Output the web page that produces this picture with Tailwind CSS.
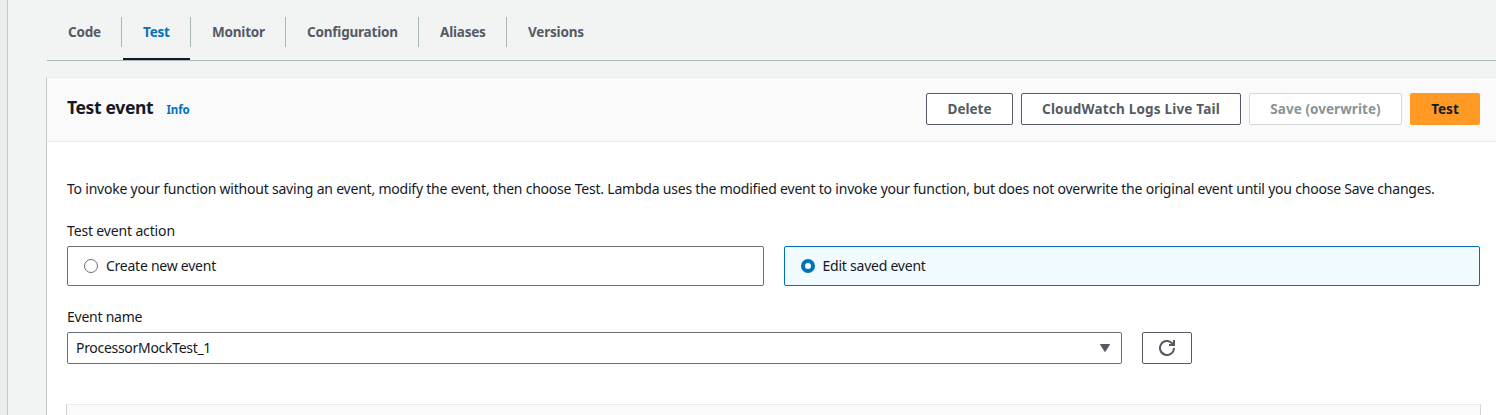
<!DOCTYPE html>
<html lang="en">
<head>
<meta charset="utf-8">
<title>Test event</title>
<script src="https://cdn.jsdelivr.net/npm/@tailwindcss/browser@4"></script>
</head>
<body class="flex h-[415px] w-[1496px] overflow-hidden bg-[#f2f3f3] font-['Noto_Sans','Open_Sans',sans-serif] text-[14px] leading-[22px] text-[#16191f]">
<aside class="w-2 shrink-0 border-r border-[#c8caca] bg-[#eaeded]"></aside>
<main class="flex min-w-0 grow flex-col pl-[38px]">
  <nav class="ml-px flex h-[61px] shrink-0 border-b border-[#aab7b8] pt-[17px] text-[13.5px] font-bold leading-[30px] tracking-[-0.2px] text-[#545b64]">
    <div class="h-[30px] w-[75px] border-r border-[#aab7b8] pl-[21px]">Code</div>
    <div class="relative h-[30px] w-[69px] border-r border-[#aab7b8] pl-[21px] text-[#0073bb]">Test<i class="absolute left-px top-[41px] h-[2px] w-[67px] bg-[#16191f]"></i></div>
    <div class="h-[30px] w-[95px] border-r border-[#aab7b8] pl-[21px]">Monitor</div>
    <div class="h-[30px] w-[133px] border-r border-[#aab7b8] pl-[21px]">Configuration</div>
    <div class="h-[30px] w-[88px] border-r border-[#aab7b8] pl-[21px]">Aliases</div>
    <div class="h-[30px] pl-[21px]">Versions</div>
  </nav>
  <section class="mt-4 flex grow flex-col border-l border-t border-l-[#c8caca] border-t-[#eaeded] bg-white">
    <header class="flex h-16 shrink-0 items-start border-b border-[#eaeded] bg-[#fafafa] pl-5 pr-4 pt-[15px]">
      <h1 class="w-[99.5px] whitespace-nowrap text-[17.5px] font-bold leading-[29px] tracking-[-0.35px]">Test event</h1>
      <a class="pt-[6px] text-[11.5px] font-bold leading-[22px] tracking-[-0.1px] text-[#0073bb]">Info</a>
      <div class="ml-auto flex gap-2 whitespace-nowrap text-[13.5px] font-bold text-[#545b64]">
        <button class="h-8 w-[87px] rounded-[2px] border border-[#545b64] bg-white">Delete</button>
        <button class="h-8 w-[220px] rounded-[2px] border border-[#545b64] bg-white tracking-[0.2px]">CloudWatch Logs Live Tail</button>
        <button class="h-8 w-[153px] rounded-[2px] border border-[#d5dbdb] bg-white tracking-[0.05px] text-[#879596]">Save (overwrite)</button>
        <button class="h-8 w-[70px] rounded-[2px] bg-[#ff9924] text-[#16191f]">Test</button>
      </div>
    </header>
    <div class="flex grow flex-col whitespace-nowrap pl-5 pr-4 pt-[36px] tracking-[-0.2px]">
      <p class="tracking-[-0.215px]">To invoke your function without saving an event, modify the event, then choose Test. Lambda uses the modified event to invoke your function, but does not overwrite the original event until you choose Save changes.</p>
      <div class="mt-5 tracking-[-0.15px]">Test event action</div>
      <div class="mt-1 flex gap-5">
        <div class="flex h-10 w-[697px] items-center rounded-[2px] border border-[#687078] pl-4">
          <svg class="mr-2 size-[14px]" viewBox="0 0 14 14"><circle cx="7" cy="7" r="6.5" fill="#fff" stroke="#687078"/></svg>
          <span class="tracking-[-0.25px]">Create new event</span>
        </div>
        <div class="flex h-10 w-[696px] items-center rounded-[2px] border border-[#0073bb] bg-[#f1faff] pl-4">
          <svg class="mr-[7.5px] size-[14px]" viewBox="0 0 14 14"><circle cx="7" cy="7" r="5" fill="#fff" stroke="#0073bb" stroke-width="4"/></svg>
          <span class="tracking-[-0.23px]">Edit saved event</span>
        </div>
      </div>
      <div class="mt-5 tracking-[-0.25px]">Event name</div>
      <div class="mt-1 flex gap-5">
        <div class="flex h-8 w-[1055px] items-center justify-between rounded-[2px] border border-[#687078] pl-2 pr-[11px]">
          <span class="tracking-[-0.3px]">ProcessorMockTest_1</span>
          <svg class="h-2 w-[10px]" viewBox="0 0 10 8"><path d="M.5.5h9L5 7.5z" fill="#545b64" stroke="#545b64" stroke-linejoin="round"/></svg>
        </div>
        <button class="flex h-8 w-[50px] items-center justify-center rounded-[2px] border border-[#545b64]">
          <svg class="size-4" viewBox="0 0 16 16" fill="none" stroke="#545b64" stroke-width="2"><path d="M15 8a7 7 0 1 1-2.2-5.1L15 5"/><path d="M15 0v5h-5"/></svg>
        </button>
      </div>
      <div class="-ml-px mt-10 h-[11px] w-[1415px] border-x border-t border-x-[#d0d4d4] border-t-[#eaeded] bg-[#fafafa]"></div>
    </div>
  </section>
</main>
</body>
</html>
